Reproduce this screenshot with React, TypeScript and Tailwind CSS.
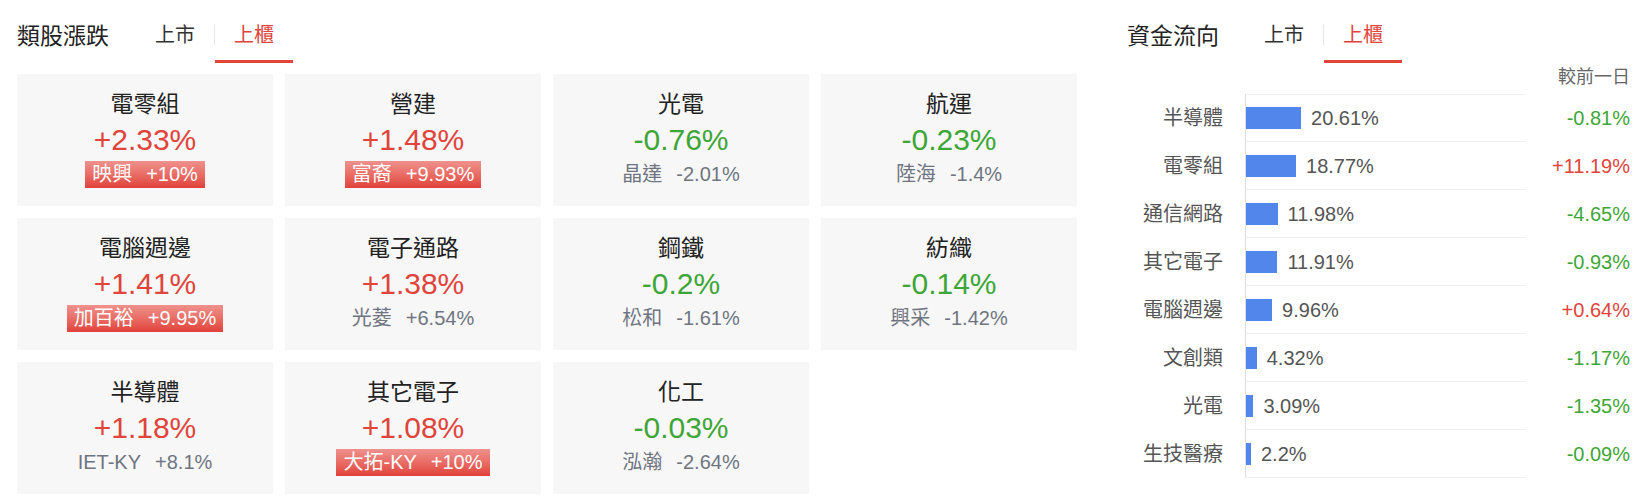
type Sector = {
  name: string
  pct: string
  stock: string
  stockPct: string
  limit?: boolean
}

type Flow = {
  name: string
  share: number
  diff: string
}

const sectors: Sector[] = [
  { name: '電零組', pct: '+2.33%', stock: '映興', stockPct: '+10%', limit: true },
  { name: '營建', pct: '+1.48%', stock: '富裔', stockPct: '+9.93%', limit: true },
  { name: '光電', pct: '-0.76%', stock: '晶達', stockPct: '-2.01%' },
  { name: '航運', pct: '-0.23%', stock: '陸海', stockPct: '-1.4%' },
  { name: '電腦週邊', pct: '+1.41%', stock: '加百裕', stockPct: '+9.95%', limit: true },
  { name: '電子通路', pct: '+1.38%', stock: '光菱', stockPct: '+6.54%' },
  { name: '鋼鐵', pct: '-0.2%', stock: '松和', stockPct: '-1.61%' },
  { name: '紡織', pct: '-0.14%', stock: '興采', stockPct: '-1.42%' },
  { name: '半導體', pct: '+1.18%', stock: 'IET-KY', stockPct: '+8.1%' },
  { name: '其它電子', pct: '+1.08%', stock: '大拓-KY', stockPct: '+10%', limit: true },
  { name: '化工', pct: '-0.03%', stock: '泓瀚', stockPct: '-2.64%' },
]

const flows: Flow[] = [
  { name: '半導體', share: 20.61, diff: '-0.81%' },
  { name: '電零組', share: 18.77, diff: '+11.19%' },
  { name: '通信網路', share: 11.98, diff: '-4.65%' },
  { name: '其它電子', share: 11.91, diff: '-0.93%' },
  { name: '電腦週邊', share: 9.96, diff: '+0.64%' },
  { name: '文創類', share: 4.32, diff: '-1.17%' },
  { name: '光電', share: 3.09, diff: '-1.35%' },
  { name: '生技醫療', share: 2.2, diff: '-0.09%' },
]

const up = (s: string) => s.startsWith('+')

function Header({ title, offset }: { title: string; offset: string }) {
  return (
    <div className="flex h-[63px] items-start">
      <h2 className="mt-[24px] text-[23px] leading-[24px] text-[#222]">{title}</h2>
      <div className={`flex h-full ${offset}`}>
        <div className="px-[19px] pt-[23px] text-[20px] leading-[24px] text-[#333]">上市</div>
        <div className="mt-[25px] h-[20px] w-px bg-[#e6e6e6]" />
        <div className="border-b-[3px] border-[#e0443b] px-[19px] pt-[23px] text-[20px] leading-[24px] text-[#e0443b]">
          上櫃
        </div>
      </div>
    </div>
  )
}

function SectorCard({ s }: { s: Sector }) {
  return (
    <div className="flex h-[132px] flex-col items-center bg-[#f7f7f7] pt-[12px]">
      <div className="h-[36px] text-[23px] leading-[36px] text-[#222]">{s.name}</div>
      <div className={`h-[36px] text-[30px] leading-[36px] ${up(s.pct) ? 'text-[#e0443b]' : 'text-[#3ea636]'}`}>
        {s.pct}
      </div>
      {s.limit ? (
        <div className="mt-[3px] flex h-[27px] items-center gap-[14px] bg-gradient-to-b from-[#ef918d] to-[#e0403a] px-[7px] text-[20px] leading-[27px] text-white">
          <span>{s.stock}</span>
          <span>{s.stockPct}</span>
        </div>
      ) : (
        <div className="mt-[3px] flex h-[27px] items-center gap-[14px] text-[20px] leading-[27px] text-[#6f7580]">
          <span>{s.stock}</span>
          <span>{s.stockPct}</span>
        </div>
      )}
    </div>
  )
}

export default function App() {
  return (
    <div className="flex h-[502px] w-[1650px] bg-white font-[family-name:'Liberation_Sans','Noto_Sans_CJK_TC',sans-serif]">
      {/* 類股漲跌 */}
      <section className="w-[1077px] pl-[17px]">
        <Header title="類股漲跌" offset="ml-[27px]" />
        <div className="mt-[11px] grid grid-cols-4 gap-[12px]">
          {sectors.map((s) => (
            <SectorCard key={s.name} s={s} />
          ))}
        </div>
      </section>

      {/* 資金流向 */}
      <section className="ml-[50px] w-[503px]">
        <Header title="資金流向" offset="ml-[26px]" />
        <div className="h-[31px] text-right text-[18px] leading-[28px] text-[#666]">較前一日</div>
        <div className="flex flex-col">
          {flows.map((f, i) => (
            <div key={f.name} className="flex h-[48px] items-stretch">
              <div className="flex w-[96px] items-center justify-end text-[20px] text-[#555]">{f.name}</div>
              <div
                className={`ml-[22px] flex w-[280px] items-center border-b border-l border-b-[#efefef] border-l-[#dddddd] ${
                  i === 0 ? 'border-t border-t-[#efefef]' : ''
                }`}
              >
                <div className="h-[22px] bg-[#5386ea]" style={{ width: `${f.share * 2.72 - 1}px` }} />
                <span className="ml-[10px] text-[20px] text-[#555]">{f.share}%</span>
              </div>
              <div
                className={`flex flex-1 items-center justify-end text-[20px] ${
                  up(f.diff) ? 'text-[#e0443b]' : 'text-[#3ea636]'
                }`}
              >
                {f.diff}
              </div>
            </div>
          ))}
        </div>
      </section>
    </div>
  )
}
